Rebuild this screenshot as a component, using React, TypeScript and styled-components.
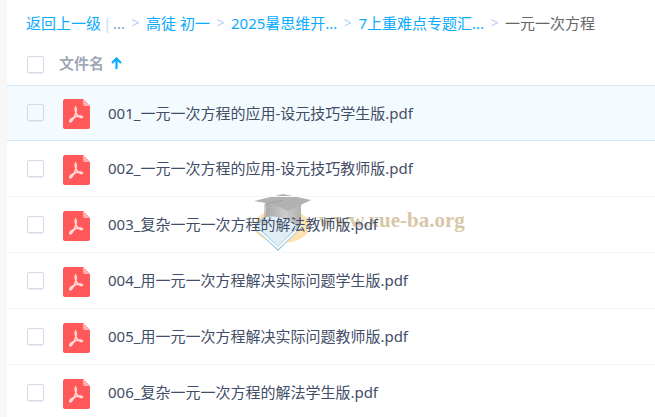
import React from "react";
import styled, { createGlobalStyle } from "styled-components";

const GlobalStyle = createGlobalStyle`
  * { box-sizing: border-box; }
  body {
    margin: 0;
    background: #fff;
    overflow: hidden;
    font-family: "Noto Sans", "Noto Sans CJK SC", sans-serif;
    font-size: 15px;
    color: #424e67;
  }
`;

const Page = styled.main`
  position: relative;
  isolation: isolate;
  min-height: 100vh;
  border-left: 7px solid #f7f7f7;
`;

const Breadcrumb = styled.nav`
  display: flex;
  align-items: center;
  height: 44px;
  padding: 2px 19px 0;
  line-height: 20px;
  white-space: nowrap;
`;

const Crumb = styled.a<{ $muted?: boolean }>`
  color: ${(p) => (p.$muted ? "#7f9fbd" : "#09aaff")};
  text-decoration: none;
`;

const Current = styled.span`
  color: #666;
`;

const Divider = styled.span`
  width: 12px;
  text-align: center;
  color: #c4dbfe;
`;

const Arrow = styled.span`
  width: 21px;
  text-align: center;
  font-size: 14px;
  color: #b4cdf2;
`;

const Table = styled.table`
  width: 100%;
  border-collapse: collapse;
`;

const HeadRow = styled.tr`
  height: 41px;
`;

const Row = styled.tr<{ $active?: boolean }>`
  height: ${(p) => (p.$active ? "55px" : "56px")};
  background: ${(p) => (p.$active ? "#f4fbff" : "transparent")};
  border-top: 1px solid ${(p) => (p.$active ? "#d4e8fa" : "#f2f6fd")};
  border-bottom: 1px solid ${(p) => (p.$active ? "#d4e8fa" : "#f2f6fd")};
`;

const CheckCell = styled.td`
  width: 52px;
  padding: 0 0 0 20px;
`;

const NameCell = styled.td`
  padding: 0;
`;

const NameHead = styled.th`
  padding: 0;
  text-align: left;
`;

const Checkbox = styled.input`
  appearance: none;
  display: block;
  width: 17px;
  height: 17px;
  margin: 0;
  border: 1px solid #d5dbe6;
  border-radius: 2px;
  background: transparent;
  box-shadow: 0 1px 1px #e9edf3;
`;

const SortButton = styled.button`
  display: flex;
  align-items: center;
  gap: 7px;
  padding: 0 0 2px;
  border: 0;
  background: none;
  font: inherit;
  font-weight: 700;
  line-height: 20px;
  color: #a0a9ba;
`;

const FileLabel = styled.label`
  display: flex;
  align-items: center;
  gap: 18px;
  padding-left: 4px;
  line-height: 20px;
  white-space: nowrap;
`;

const FileIcon = styled.svg`
  display: block;
  width: 27px;
  height: 33px;
  padding-top: 3px;
`;

const Watermark = styled.div`
  position: absolute;
  z-index: -1;
  top: 192px;
  left: 244px;
  display: flex;
  align-items: center;
  gap: 7px;
  opacity: 0.5;
  pointer-events: none;
  font: bold 21px/28px "Liberation Serif", serif;
  color: #b39050;
`;

const WatermarkText = styled.span`
  padding-bottom: 4px;
`;

const PdfIcon = () => (
  <FileIcon viewBox="0 0 27 30" aria-hidden="true">
    <path d="M2 0H20L27 7V28Q27 30 25 30H2Q0 30 0 28V2Q0 0 2 0Z" fill="#ff5959" />
    <path d="M20 0L27 7H22Q20 7 20 5Z" fill="#ffafaf" />
    <path
      d="M12.5 8.2C14.3 10 13 14 11.6 17.2C10.2 20.3 8.4 22.8 7.2 22.9C5.8 22.4 8 19.5 11 18.4C14.5 17.1 18.4 16.6 19.5 18C19.2 19.4 15.5 18.2 13.8 15.4C12.6 13.5 11.7 9.8 12.5 8.2Z"
      fill="none"
      stroke="#ffdada"
      strokeWidth="1.6"
    />
  </FileIcon>
);

const SortArrow = () => (
  <svg width="11" height="12" viewBox="0 0 11 12" aria-hidden="true">
    <path d="M5.5 12V2M1 6L5.5 1.5L10 6" fill="none" stroke="#09aaff" strokeWidth="2.2" />
  </svg>
);

const GraduationLogo = () => (
  <svg width="61" height="60" viewBox="0 0 61 60" aria-hidden="true">
    <defs>
      <linearGradient id="cap" x1="0" y1="0" x2="1" y2="0">
        <stop offset="0" stopColor="#555" />
        <stop offset="0.55" stopColor="#999" />
        <stop offset="1" stopColor="#666" />
      </linearGradient>
    </defs>
    <ellipse cx="31" cy="34" rx="28" ry="17" fill="#fbc866" />
    <path d="M4 33L18 20L50 31V36L27 59L4 37Z" fill="#2f8fcb" />
    <path d="M6 34L19 20L49 32L27 54Z" fill="#c4dceb" />
    <path d="M5 36L27 56L50 34" fill="none" stroke="#fff" strokeWidth="2" />
    <path d="M15 12V25Q34 22 46 35Q50 33 50 26V12Z" fill="url(#cap)" />
    <path d="M3 9L32 2L60 8L37 19Q24 12 3 9Z" fill="#666" />
    <path d="M32 8L14 12V25" fill="none" stroke="#444" strokeWidth="1" />
    <path d="M14 22L10 33L16 31Z" fill="#888" />
  </svg>
);

const files = [
  "001_一元一次方程的应用-设元技巧学生版.pdf",
  "002_一元一次方程的应用-设元技巧教师版.pdf",
  "003_复杂一元一次方程的解法教师版.pdf",
  "004_用一元一次方程解决实际问题学生版.pdf",
  "005_用一元一次方程解决实际问题教师版.pdf",
  "006_复杂一元一次方程的解法学生版.pdf",
];

export default function App() {
  return (
    <Page>
      <GlobalStyle />
      <Breadcrumb aria-label="路径">
        <Crumb href="#">返回上一级</Crumb>
        <Divider>|</Divider>
        <Crumb href="#" $muted>...</Crumb>
        <Arrow>&gt;</Arrow>
        <Crumb href="#">高徒 初一</Crumb>
        <Arrow>&gt;</Arrow>
        <Crumb href="#">2025暑思维开...</Crumb>
        <Arrow>&gt;</Arrow>
        <Crumb href="#">7上重难点专题汇...</Crumb>
        <Arrow>&gt;</Arrow>
        <Current>一元一次方程</Current>
      </Breadcrumb>
      <Table>
        <thead>
          <HeadRow>
            <CheckCell>
              <Checkbox type="checkbox" aria-label="全选" />
            </CheckCell>
            <NameHead>
              <SortButton type="button">
                文件名
                <SortArrow />
              </SortButton>
            </NameHead>
          </HeadRow>
        </thead>
        <tbody>
          {files.map((name, i) => (
            <Row key={name} $active={i === 0}>
              <CheckCell>
                <Checkbox type="checkbox" id={`file-${i}`} />
              </CheckCell>
              <NameCell>
                <FileLabel htmlFor={`file-${i}`}>
                  <PdfIcon />
                  {name}
                </FileLabel>
              </NameCell>
            </Row>
          ))}
        </tbody>
      </Table>
      <Watermark>
        <GraduationLogo />
        <WatermarkText>www.xue-ba.org</WatermarkText>
      </Watermark>
    </Page>
  );
}
